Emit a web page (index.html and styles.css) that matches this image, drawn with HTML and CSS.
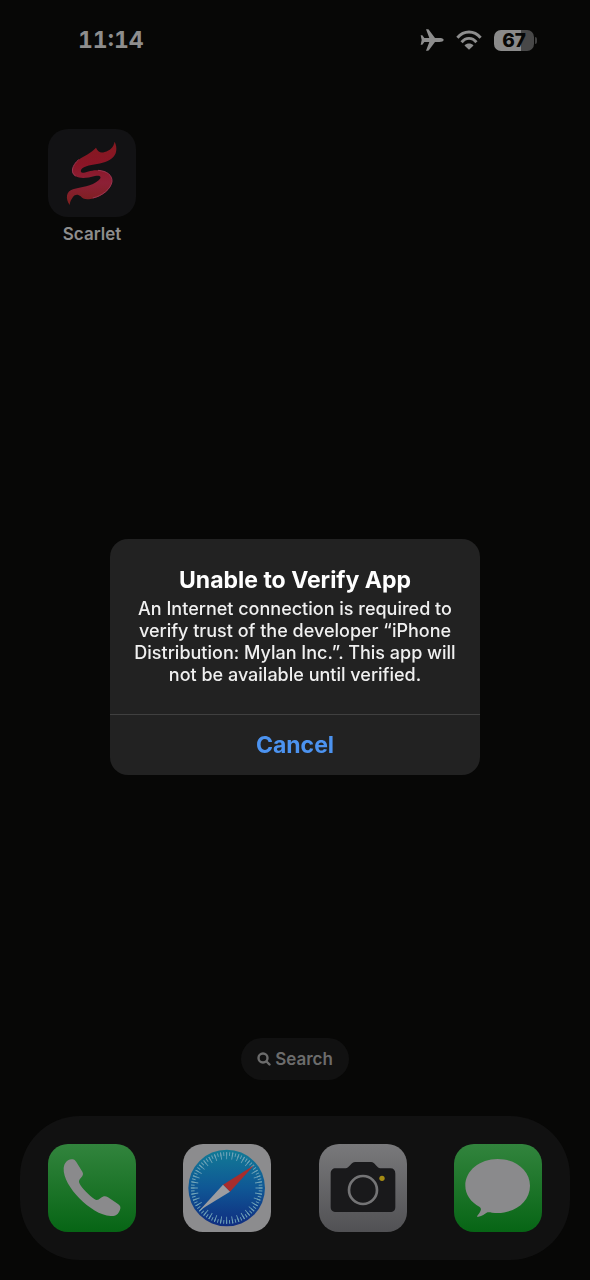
FILE: index.html
```html
<!DOCTYPE html>
<html lang="en">
<head>
<meta charset="utf-8">
<meta name="viewport" content="width=device-width, initial-scale=1">
<title>Home Screen</title>
<link rel="stylesheet" href="styles.css">
</head>
<body>
<div class="screen">
  <header class="status">
    <time class="clock">11:14</time>
    <div class="indicators">
      <svg class="plane" viewBox="0 0 72 66" role="img" aria-label="Airplane mode"><path d="M71 33C71 29 65 27 58 27H45L27 3C26 1 24 1 21 1H18L28 27H13L7 19H2L5 33L2 47H7L13 39H28L18 65H21C24 65 26 65 27 63L45 39H58C65 39 71 37 71 33Z"/></svg>
      <svg class="wifi" viewBox="0 0 80 62" role="img" aria-label="Wi-Fi"><g fill="none" stroke="#8d8d8d" stroke-width="9"><path d="M4 24C24 0 56 0 76 24"/><path d="M17 38C30 22 50 22 63 38"/></g><path d="M40 61L26 48C34 40 46 40 54 48Z"/></svg>
      <div class="battery"><span class="level">67</span></div>
    </div>
  </header>

  <main class="apps">
    <a class="app" href="#scarlet">
      <svg class="icon" viewBox="0 0 264 264" aria-hidden="true">
        <defs><linearGradient id="flame" x1="0" y1="0" x2="0" y2="1"><stop offset="0" stop-color="#841a20"/><stop offset=".35" stop-color="#8a1526"/><stop offset=".65" stop-color="#8c2036"/><stop offset="1" stop-color="#7c1f1d"/></linearGradient></defs>
        <rect width="264" height="264" rx="60" fill="#121214"/>
        <path fill="url(#flame)" d="M200 38C209 58 206 76 192 88C176 102 153 104 130 108C108 112 96 120 99 129C103 137 126 122 150 124C177 126 193 138 192 158C188 182 162 204 128 210C112 213 104 209 98 202C90 194 80 196 75 204C69 212 66 219 65 228C51 208 55 187 75 181C98 175 132 172 152 154C163 144 157 138 141 141C119 147 98 150 83 142C67 132 71 110 92 92C109 79 128 74 144 56C149 68 158 74 170 69C186 64 196 56 200 38Z"/>
        <path fill="none" stroke="#9a3450" stroke-width="3" d="M83 141C67 132 71 110 92 92M150 124C177 126 193 138 192 158C188 180 164 200 134 207"/>
      </svg>
      <span class="name">Scarlet</span>
    </a>
  </main>

  <button class="search" type="button">
    <svg class="glass" viewBox="0 0 14 14" aria-hidden="true"><circle cx="6" cy="6" r="4.5"/><path d="M9.5 9.5L12.5 12.5"/></svg>
    Search
  </button>

  <nav class="dock" aria-label="Dock">
    <a href="#phone" aria-label="Phone">
      <svg class="icon" viewBox="0 0 264 264">
        <defs><linearGradient id="green" x1="0" y1="0" x2="0" y2="1"><stop offset="0" stop-color="#32843d"/><stop offset="1" stop-color="#076515"/></linearGradient></defs>
        <rect width="264" height="264" rx="60" fill="url(#green)"/>
        <path fill="#8a8a8c" d="M70 46C77 44 81 47 85 54L103 83C107 90 105 94 99 101C93 107 91 112 95 119C103 134 123 153 139 165C146 170 151 168 158 162C166 156 172 155 180 160L210 180C217 185 219 189 216 197C211 211 203 217 188 216C157 215 122 191 94 163C68 136 45 101 47 72C49 56 58 47 70 46Z"/>
      </svg>
    </a>
    <a href="#safari" aria-label="Safari">
      <svg class="icon" viewBox="0 0 264 264">
        <defs><linearGradient id="sky" x1="0" y1="0" x2="0" y2="1"><stop offset="0" stop-color="#127b96"/><stop offset=".5" stop-color="#0f5795"/><stop offset="1" stop-color="#102d80"/></linearGradient></defs>
        <rect width="264" height="264" rx="60" fill="#8c8c8e"/>
        <circle cx="131" cy="132" r="115" fill="url(#sky)"/>
        <g fill="none" stroke="#6fa3b8"><circle cx="131" cy="132" r="102" stroke-width="11" pathLength="360" stroke-dasharray="1.6 3.4" stroke-dashoffset="0.8"/><circle cx="131" cy="132" r="97" stroke-width="21" pathLength="360" stroke-dasharray="1.6 8.4" stroke-dashoffset="0.8"/></g>
        <path fill="#a72d2d" d="M213 64L120 122L141 143Z"/>
        <path fill="#9c9da1" d="M50 199L120 122L141 143Z"/>
      </svg>
    </a>
    <a href="#camera" aria-label="Camera">
      <svg class="icon" viewBox="0 0 264 264">
        <defs><linearGradient id="silver" x1="0" y1="0" x2="0" y2="1"><stop offset="0" stop-color="#79797b"/><stop offset="1" stop-color="#515154"/></linearGradient></defs>
        <rect width="264" height="264" rx="60" fill="url(#silver)"/>
        <path fill="#19191b" d="M50 73H80C91 73 95 54 109 54H156C169 54 173 73 184 73H214C224 73 229 79 229 89V188C229 199 224 204 213 204H52C41 204 35 199 35 188V89C35 79 41 73 50 73Z"/>
        <circle cx="132" cy="138" r="42" fill="none" stroke="#747476" stroke-width="8"/>
        <circle cx="189" cy="103" r="8" fill="#a58b14"/>
      </svg>
    </a>
    <a href="#messages" aria-label="Messages">
      <svg class="icon" viewBox="0 0 264 264">
        <rect width="264" height="264" rx="60" fill="url(#green)"/>
        <path fill="#8a8a8c" d="M131 45C77 45 34 80 34 125C34 151 50 174 77 189C84 194 81 202 70 215C68 218 69 219 73 218C85 215 92 210 98 206C102 204 108 205 114 206C120 207 126 207 131 207C185 207 228 171 228 125C228 80 185 45 131 45Z"/>
      </svg>
    </a>
  </nav>
</div>

<div class="overlay">
  <section class="alert" role="alertdialog" aria-modal="true" aria-labelledby="alert-title" aria-describedby="alert-text">
    <div class="message">
      <h1 class="title" id="alert-title">Unable to Verify App</h1>
      <p class="text" id="alert-text">An Internet connection is required to verify trust of the developer “iPhone Distribution: Mylan Inc.”. This app will not be available until verified.</p>
    </div>
    <button class="cancel" type="button">Cancel</button>
  </section>
</div>
</body>
</html>
```
FILE: styles.css
```css
* {
  box-sizing: border-box;
}

body {
  margin: 0;
  background: #070706;
  color: #8d8d8d;
  font-family: Inter, "Liberation Sans", sans-serif;
}

button {
  border: 0;
  font: inherit;
}

a {
  color: inherit;
  text-decoration: none;
}

.screen {
  display: flex;
  flex-direction: column;
  min-height: 100vh;
  padding: 24px 20px 20px;
}

.status {
  display: flex;
  align-items: center;
  justify-content: space-between;
  height: 32px;
  padding: 0 33px 0 58px;
}

.clock {
  font-size: 23px;
  font-variant-numeric: tabular-nums;
  font-weight: 700;
}

.indicators {
  display: flex;
  align-items: center;
  gap: 12px;
}

.plane {
  width: 24px;
  height: 22px;
  fill: #8d8d8d;
}

.wifi {
  width: 26px;
  height: 20px;
  fill: #8d8d8d;
}

.battery {
  display: flex;
  align-items: center;
  gap: 1px;
}

.battery::after {
  content: "";
  width: 2px;
  height: 7px;
  border-radius: 0 2px 2px 0;
  background: #3f3f3f;
}

.level {
  width: 40px;
  border-radius: 7px;
  background: linear-gradient(90deg, #8a8a8a 67%, #484848 67%);
  color: #070706;
  font-size: 19px;
  font-weight: 800;
  line-height: 21px;
  text-align: center;
}

.apps {
  display: grid;
  grid-template-columns: repeat(4, 88px);
  justify-content: space-between;
  align-content: start;
  flex: 1;
  padding: 73px 28px 0;
}

.app {
  display: flex;
  flex-direction: column;
  align-items: center;
  gap: 6px;
}

.icon {
  display: block;
  width: 88px;
  height: 88px;
}

.name {
  font-size: 17px;
  font-weight: 600;
  line-height: 22px;
}

.search {
  display: flex;
  align-items: center;
  align-self: center;
  gap: 4px;
  height: 42px;
  margin-bottom: 36px;
  padding: 0 16px;
  border-radius: 21px;
  background: #111111;
  color: #6c6c6c;
  font-size: 17px;
  font-weight: 600;
}

.glass {
  width: 14px;
  height: 14px;
  fill: none;
  stroke: #6c6c6c;
  stroke-width: 2.4;
  stroke-linecap: round;
}

.dock {
  display: flex;
  justify-content: space-between;
  padding: 28px;
  border-radius: 60px;
  background: #111111;
}

.overlay {
  position: fixed;
  inset: 0;
  display: flex;
  align-items: center;
  justify-content: center;
  padding: 34px 20px 0;
}

.alert {
  width: 370px;
  max-width: 100%;
  overflow: hidden;
  border-radius: 18px;
  background: #222222;
  text-align: center;
}

.message {
  padding: 25px 20px 28px;
}

.title {
  margin: 0 0 2px;
  color: #ffffff;
  font-size: 23px;
  font-weight: 700;
  line-height: 32px;
}

.text {
  margin: 0;
  color: #f0f0f0;
  font-size: 18px;
  font-weight: 500;
  line-height: 22px;
}

.cancel {
  width: 100%;
  height: 61px;
  border-top: 1px solid #404040;
  background: none;
  color: #4c93f0;
  font-size: 23px;
  font-weight: 700;
}
```
